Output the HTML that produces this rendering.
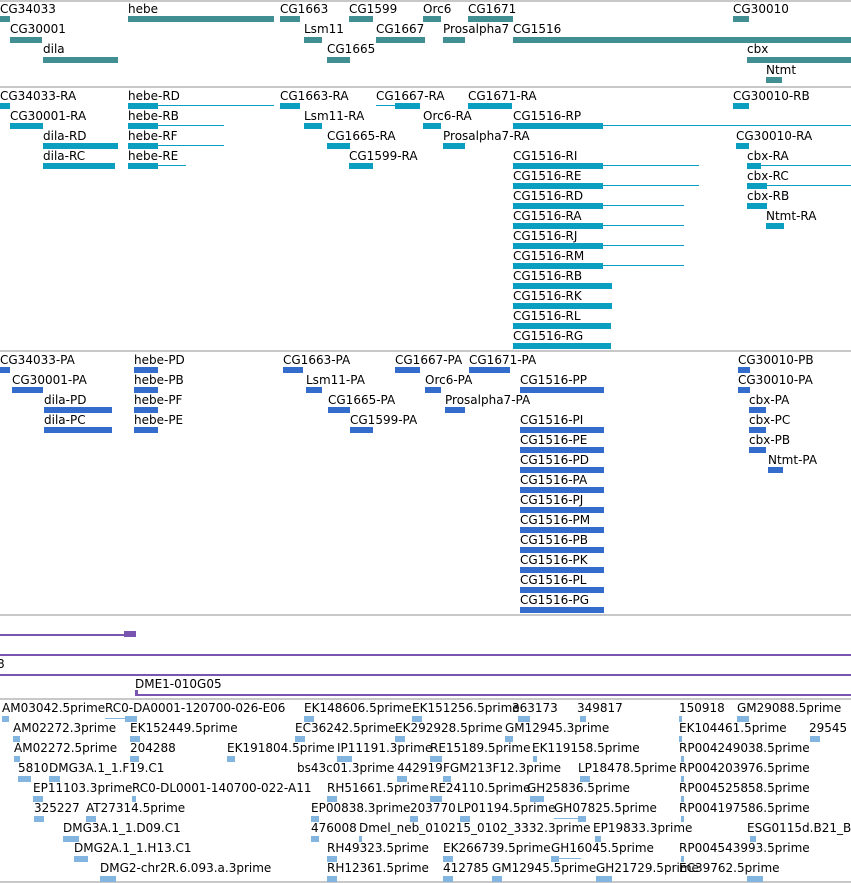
<!DOCTYPE html><html><head><style>
body{margin:0;width:851px;height:883px;position:relative;overflow:hidden;background:#fff}
.t{position:absolute;font:12px "DejaVu Sans","Liberation Sans",sans-serif;line-height:14px;color:#000;white-space:nowrap}
.b{position:absolute;height:6px}
.l{position:absolute;height:1px}
.g{background:#418f93}.r{background:#0a9fc0}.p{background:#346ccc}.e{background:#82b6e0}.v{background:#7a55b0}
.s{position:absolute;left:0;width:851px;height:2px;background:#c8c8c8}
</style></head><body>
<div class="s" style="top:0"></div><div class="s" style="top:86"></div>
<div class="s" style="top:86px"></div><div class="s" style="top:350px"></div><div class="s" style="top:614px"></div><div class="s" style="top:698px"></div><div class="s" style="top:881px"></div>

<!-- genes -->
<div class="t" style="left:0;top:2px">CG34033</div><div class="b g" style="left:0;top:16px;width:10px"></div>
<div class="t" style="left:128px;top:2px">hebe</div><div class="b g" style="left:128px;top:16px;width:146px"></div>
<div class="t" style="left:280px;top:2px">CG1663</div><div class="b g" style="left:280px;top:16px;width:20px"></div>
<div class="t" style="left:349px;top:2px">CG1599</div><div class="b g" style="left:349px;top:16px;width:24px"></div>
<div class="t" style="left:423px;top:2px">Orc6</div><div class="b g" style="left:423px;top:16px;width:18px"></div>
<div class="t" style="left:468px;top:2px">CG1671</div><div class="b g" style="left:468px;top:16px;width:45px"></div>
<div class="t" style="left:733px;top:2px">CG30010</div><div class="b g" style="left:733px;top:16px;width:16px"></div>
<div class="t" style="left:10px;top:22px">CG30001</div><div class="b g" style="left:10px;top:37px;width:32px"></div>
<div class="t" style="left:304px;top:22px">Lsm11</div><div class="b g" style="left:304px;top:37px;width:18px"></div>
<div class="t" style="left:376px;top:22px">CG1667</div><div class="b g" style="left:376px;top:37px;width:49px"></div>
<div class="t" style="left:443px;top:22px">Prosalpha7</div><div class="b g" style="left:443px;top:37px;width:22px"></div>
<div class="t" style="left:513px;top:22px">CG1516</div><div class="b g" style="left:513px;top:37px;width:338px"></div>
<div class="t" style="left:43px;top:42px">dila</div><div class="b g" style="left:43px;top:57px;width:75px"></div>
<div class="t" style="left:327px;top:42px">CG1665</div><div class="b g" style="left:327px;top:57px;width:23px"></div>
<div class="t" style="left:747px;top:42px">cbx</div><div class="b g" style="left:747px;top:57px;width:104px"></div>
<div class="t" style="left:766px;top:63px">Ntmt</div><div class="b g" style="left:766px;top:77px;width:16px"></div>

<!-- transcripts -->
<div class="t" style="left:0;top:89px">CG34033-RA</div><div class="b r" style="left:0;top:103px;width:10px"></div>
<div class="t" style="left:128px;top:89px">hebe-RD</div><div class="b r" style="left:128px;top:103px;width:30px"></div><div class="l r" style="left:158px;top:105px;width:116px"></div>
<div class="t" style="left:280px;top:89px">CG1663-RA</div><div class="b r" style="left:280px;top:103px;width:20px"></div>
<div class="t" style="left:376px;top:89px">CG1667-RA</div><div class="l r" style="left:376px;top:105px;width:20px"></div><div class="b r" style="left:395px;top:103px;width:25px"></div>
<div class="t" style="left:468px;top:89px">CG1671-RA</div><div class="b r" style="left:468px;top:103px;width:44px"></div>
<div class="t" style="left:733px;top:89px">CG30010-RB</div><div class="b r" style="left:733px;top:103px;width:16px"></div>
<div class="t" style="left:10px;top:109px">CG30001-RA</div><div class="b r" style="left:10px;top:123px;width:33px"></div>
<div class="t" style="left:128px;top:109px">hebe-RB</div><div class="b r" style="left:128px;top:123px;width:30px"></div><div class="l r" style="left:158px;top:125px;width:66px"></div>
<div class="t" style="left:304px;top:109px">Lsm11-RA</div><div class="b r" style="left:304px;top:123px;width:18px"></div>
<div class="t" style="left:423px;top:109px">Orc6-RA</div><div class="b r" style="left:423px;top:123px;width:18px"></div>
<div class="t" style="left:513px;top:109px">CG1516-RP</div><div class="b r" style="left:513px;top:123px;width:90px"></div><div class="l r" style="left:603px;top:125px;width:248px"></div>
<div class="t" style="left:43px;top:129px">dila-RD</div><div class="b r" style="left:43px;top:143px;width:75px"></div>
<div class="t" style="left:128px;top:129px">hebe-RF</div><div class="b r" style="left:128px;top:143px;width:30px"></div><div class="l r" style="left:158px;top:145px;width:66px"></div>
<div class="t" style="left:327px;top:129px">CG1665-RA</div><div class="b r" style="left:327px;top:143px;width:23px"></div>
<div class="t" style="left:443px;top:129px">Prosalpha7-RA</div><div class="b r" style="left:443px;top:143px;width:22px"></div>
<div class="t" style="left:736px;top:129px">CG30010-RA</div><div class="b r" style="left:736px;top:143px;width:13px"></div>
<div class="t" style="left:43px;top:149px">dila-RC</div><div class="b r" style="left:43px;top:163px;width:72px"></div>
<div class="t" style="left:128px;top:149px">hebe-RE</div><div class="b r" style="left:128px;top:163px;width:30px"></div><div class="l r" style="left:158px;top:165px;width:28px"></div>
<div class="t" style="left:349px;top:149px">CG1599-RA</div><div class="b r" style="left:349px;top:163px;width:24px"></div>
<div class="t" style="left:747px;top:149px">cbx-RA</div><div class="b r" style="left:747px;top:163px;width:14px"></div><div class="l r" style="left:760px;top:165px;width:91px"></div>
<div class="t" style="left:747px;top:169px">cbx-RC</div><div class="b r" style="left:747px;top:183px;width:20px"></div><div class="l r" style="left:766px;top:185px;width:85px"></div>
<div class="t" style="left:747px;top:189px">cbx-RB</div><div class="b r" style="left:747px;top:203px;width:20px"></div>
<div class="t" style="left:766px;top:209px">Ntmt-RA</div><div class="b r" style="left:766px;top:223px;width:18px"></div>

<div class="t" style="left:513px;top:149px">CG1516-RI</div><div class="b r" style="left:513px;top:163px;width:90px"></div><div class="l r" style="left:603px;top:165px;width:96px"></div>
<div class="t" style="left:513px;top:169px">CG1516-RE</div><div class="b r" style="left:513px;top:183px;width:90px"></div><div class="l r" style="left:603px;top:185px;width:96px"></div>
<div class="t" style="left:513px;top:189px">CG1516-RD</div><div class="b r" style="left:513px;top:203px;width:90px"></div><div class="l r" style="left:603px;top:205px;width:81px"></div>
<div class="t" style="left:513px;top:209px">CG1516-RA</div><div class="b r" style="left:513px;top:223px;width:90px"></div><div class="l r" style="left:603px;top:225px;width:81px"></div>
<div class="t" style="left:513px;top:229px">CG1516-RJ</div><div class="b r" style="left:513px;top:243px;width:90px"></div><div class="l r" style="left:603px;top:245px;width:81px"></div>
<div class="t" style="left:513px;top:249px">CG1516-RM</div><div class="b r" style="left:513px;top:263px;width:90px"></div><div class="l r" style="left:603px;top:265px;width:81px"></div>
<div class="t" style="left:513px;top:269px">CG1516-RB</div><div class="b r" style="left:513px;top:283px;width:99px"></div>
<div class="t" style="left:513px;top:289px">CG1516-RK</div><div class="b r" style="left:513px;top:303px;width:99px"></div>
<div class="t" style="left:513px;top:309px">CG1516-RL</div><div class="b r" style="left:513px;top:323px;width:98px"></div>
<div class="t" style="left:513px;top:329px">CG1516-RG</div><div class="b r" style="left:513px;top:343px;width:98px"></div>

<!-- proteins -->
<div class="t" style="left:0;top:353px">CG34033-PA</div><div class="b p" style="left:0;top:367px;width:10px"></div>
<div class="t" style="left:134px;top:353px">hebe-PD</div><div class="b p" style="left:134px;top:367px;width:24px"></div>
<div class="t" style="left:283px;top:353px">CG1663-PA</div><div class="b p" style="left:283px;top:367px;width:20px"></div>
<div class="t" style="left:395px;top:353px">CG1667-PA</div><div class="b p" style="left:395px;top:367px;width:25px"></div>
<div class="t" style="left:469px;top:353px">CG1671-PA</div><div class="b p" style="left:469px;top:367px;width:41px"></div>
<div class="t" style="left:738px;top:353px">CG30010-PB</div><div class="b p" style="left:738px;top:367px;width:12px"></div>
<div class="t" style="left:12px;top:373px">CG30001-PA</div><div class="b p" style="left:12px;top:387px;width:31px"></div>
<div class="t" style="left:134px;top:373px">hebe-PB</div><div class="b p" style="left:134px;top:387px;width:24px"></div>
<div class="t" style="left:306px;top:373px">Lsm11-PA</div><div class="b p" style="left:306px;top:387px;width:16px"></div>
<div class="t" style="left:425px;top:373px">Orc6-PA</div><div class="b p" style="left:425px;top:387px;width:16px"></div>
<div class="t" style="left:520px;top:373px">CG1516-PP</div><div class="b p" style="left:520px;top:387px;width:84px"></div>
<div class="t" style="left:738px;top:373px">CG30010-PA</div><div class="b p" style="left:738px;top:387px;width:12px"></div>
<div class="t" style="left:44px;top:393px">dila-PD</div><div class="b p" style="left:44px;top:407px;width:68px"></div>
<div class="t" style="left:134px;top:393px">hebe-PF</div><div class="b p" style="left:134px;top:407px;width:24px"></div>
<div class="t" style="left:328px;top:393px">CG1665-PA</div><div class="b p" style="left:328px;top:407px;width:22px"></div>
<div class="t" style="left:445px;top:393px">Prosalpha7-PA</div><div class="b p" style="left:445px;top:407px;width:20px"></div>
<div class="t" style="left:749px;top:393px">cbx-PA</div><div class="b p" style="left:749px;top:407px;width:17px"></div>
<div class="t" style="left:44px;top:413px">dila-PC</div><div class="b p" style="left:44px;top:427px;width:68px"></div>
<div class="t" style="left:134px;top:413px">hebe-PE</div><div class="b p" style="left:134px;top:427px;width:24px"></div>
<div class="t" style="left:350px;top:413px">CG1599-PA</div><div class="b p" style="left:350px;top:427px;width:23px"></div>
<div class="t" style="left:749px;top:413px">cbx-PC</div><div class="b p" style="left:749px;top:427px;width:17px"></div>
<div class="t" style="left:749px;top:433px">cbx-PB</div><div class="b p" style="left:749px;top:447px;width:17px"></div>
<div class="t" style="left:768px;top:453px">Ntmt-PA</div><div class="b p" style="left:768px;top:467px;width:15px"></div>
<div class="t" style="left:520px;top:413px">CG1516-PI</div><div class="b p" style="left:520px;top:427px;width:84px"></div>
<div class="t" style="left:520px;top:433px">CG1516-PE</div><div class="b p" style="left:520px;top:447px;width:84px"></div>
<div class="t" style="left:520px;top:453px">CG1516-PD</div><div class="b p" style="left:520px;top:467px;width:84px"></div>
<div class="t" style="left:520px;top:473px">CG1516-PA</div><div class="b p" style="left:520px;top:487px;width:84px"></div>
<div class="t" style="left:520px;top:493px">CG1516-PJ</div><div class="b p" style="left:520px;top:507px;width:84px"></div>
<div class="t" style="left:520px;top:513px">CG1516-PM</div><div class="b p" style="left:520px;top:527px;width:84px"></div>
<div class="t" style="left:520px;top:533px">CG1516-PB</div><div class="b p" style="left:520px;top:547px;width:84px"></div>
<div class="t" style="left:520px;top:553px">CG1516-PK</div><div class="b p" style="left:520px;top:567px;width:84px"></div>
<div class="t" style="left:520px;top:573px">CG1516-PL</div><div class="b p" style="left:520px;top:587px;width:84px"></div>
<div class="t" style="left:520px;top:593px">CG1516-PG</div><div class="b p" style="left:520px;top:607px;width:84px"></div>

<!-- purple -->
<div class="l v" style="left:0;top:634px;width:128px;height:2px"></div><div class="b v" style="left:124px;top:631px;width:12px"></div>
<div class="l v" style="left:0;top:654px;width:851px;height:2px"></div>
<div class="t" style="left:-3px;top:657px">8</div>
<div class="l v" style="left:0;top:674px;width:851px;height:2px"></div>
<div class="t" style="left:135px;top:677px">DME1-010G05</div>
<div class="l v" style="left:135px;top:694px;width:716px;height:2px"></div><div class="b v" style="left:135px;top:690px;width:3px"></div>

<!-- ESTs -->
<div class="t" style="left:2px;top:701px">AM03042.5prime</div><div class="b e" style="left:2px;top:716px;width:7px"></div>
<div class="t" style="left:105px;top:701px">RC0-DA0001-120700-026-E06</div><div class="l e" style="left:105px;top:718px;width:27px"></div><div class="b e" style="left:125px;top:716px;width:12px"></div>
<div class="t" style="left:304px;top:701px">EK148606.5prime</div><div class="b e" style="left:304px;top:716px;width:10px"></div>
<div class="t" style="left:412px;top:701px">EK151256.5prime</div><div class="b e" style="left:412px;top:716px;width:10px"></div>
<div class="t" style="left:512px;top:701px">363173</div><div class="b e" style="left:518px;top:716px;width:12px"></div>
<div class="t" style="left:577px;top:701px">349817</div><div class="b e" style="left:580px;top:716px;width:6px"></div>
<div class="t" style="left:679px;top:701px">150918</div><div class="b e" style="left:679px;top:716px;width:3px"></div>
<div class="t" style="left:737px;top:701px">GM29088.5prime</div><div class="b e" style="left:737px;top:716px;width:12px"></div>

<div class="t" style="left:13px;top:721px">AM02272.3prime</div><div class="b e" style="left:13px;top:736px;width:7px"></div>
<div class="t" style="left:130px;top:721px">EK152449.5prime</div><div class="b e" style="left:130px;top:736px;width:10px"></div>
<div class="t" style="left:295px;top:721px">EC36242.5prime</div><div class="b e" style="left:295px;top:736px;width:10px"></div>
<div class="t" style="left:395px;top:721px">EK292928.5prime</div><div class="b e" style="left:395px;top:736px;width:10px"></div>
<div class="t" style="left:505px;top:721px">GM12945.3prime</div><div class="b e" style="left:505px;top:736px;width:8px"></div>
<div class="t" style="left:679px;top:721px">EK104461.5prime</div><div class="b e" style="left:679px;top:736px;width:3px"></div>
<div class="t" style="left:809px;top:721px">29545</div><div class="b e" style="left:810px;top:736px;width:10px"></div>

<div class="t" style="left:14px;top:741px">AM02272.5prime</div><div class="b e" style="left:14px;top:756px;width:6px"></div>
<div class="t" style="left:130px;top:741px">204288</div><div class="b e" style="left:130px;top:756px;width:9px"></div>
<div class="t" style="left:227px;top:741px">EK191804.5prime</div><div class="b e" style="left:227px;top:756px;width:8px"></div>
<div class="t" style="left:337px;top:741px">IP11191.3prime</div><div class="b e" style="left:337px;top:756px;width:15px"></div>
<div class="t" style="left:430px;top:741px">RE15189.5prime</div><div class="b e" style="left:430px;top:756px;width:12px"></div>
<div class="t" style="left:532px;top:741px">EK119158.5prime</div><div class="b e" style="left:533px;top:756px;width:4px"></div>
<div class="t" style="left:679px;top:741px">RP004249038.5prime</div><div class="b e" style="left:681px;top:756px;width:3px"></div>

<div class="t" style="left:18px;top:761px">5810</div><div class="b e" style="left:18px;top:776px;width:13px"></div>
<div class="t" style="left:49px;top:761px">DMG3A.1_1.F19.C1</div><div class="b e" style="left:49px;top:776px;width:11px"></div>
<div class="t" style="left:297px;top:761px">bs43c01.3prime</div>
<div class="t" style="left:397px;top:761px">442919</div><div class="b e" style="left:397px;top:776px;width:10px"></div>
<div class="t" style="left:443px;top:761px">FGM213F12.3prime</div><div class="b e" style="left:443px;top:776px;width:8px"></div>
<div class="t" style="left:578px;top:761px">LP18478.5prime</div><div class="b e" style="left:580px;top:776px;width:10px"></div>
<div class="t" style="left:679px;top:761px">RP004203976.5prime</div><div class="b e" style="left:681px;top:776px;width:3px"></div>

<div class="t" style="left:33px;top:781px">EP11103.3prime</div><div class="b e" style="left:33px;top:796px;width:10px"></div>
<div class="t" style="left:132px;top:781px">RC0-DL0001-140700-022-A11</div><div class="b e" style="left:132px;top:796px;width:4px"></div>
<div class="t" style="left:327px;top:781px">RH51661.5prime</div><div class="b e" style="left:327px;top:796px;width:10px"></div>
<div class="t" style="left:430px;top:781px">RE24110.5prime</div><div class="b e" style="left:430px;top:796px;width:12px"></div>
<div class="t" style="left:527px;top:781px">GH25836.5prime</div><div class="b e" style="left:530px;top:796px;width:14px"></div>
<div class="t" style="left:679px;top:781px">RP004525858.5prime</div><div class="b e" style="left:681px;top:796px;width:3px"></div>

<div class="t" style="left:34px;top:801px">325227</div><div class="b e" style="left:34px;top:816px;width:10px"></div>
<div class="t" style="left:86px;top:801px">AT27314.5prime</div><div class="b e" style="left:86px;top:816px;width:10px"></div>
<div class="t" style="left:311px;top:801px">EP00838.3prime</div><div class="b e" style="left:311px;top:816px;width:8px"></div>
<div class="t" style="left:410px;top:801px">203770</div><div class="b e" style="left:410px;top:816px;width:8px"></div>
<div class="t" style="left:457px;top:801px">LP01194.5prime</div><div class="b e" style="left:460px;top:816px;width:10px"></div>
<div class="t" style="left:554px;top:801px">GH07825.5prime</div><div class="l e" style="left:554px;top:818px;width:30px"></div><div class="b e" style="left:578px;top:816px;width:8px"></div>
<div class="t" style="left:679px;top:801px">RP004197586.5prime</div><div class="b e" style="left:681px;top:816px;width:3px"></div>

<div class="t" style="left:63px;top:821px">DMG3A.1_1.D09.C1</div><div class="b e" style="left:63px;top:836px;width:16px"></div>
<div class="t" style="left:311px;top:821px">476008</div><div class="b e" style="left:311px;top:836px;width:8px"></div>
<div class="t" style="left:359px;top:821px">Dmel_neb_010215_0102_3332.3prime</div><div class="b e" style="left:359px;top:836px;width:3px"></div>
<div class="t" style="left:593px;top:821px">EP19833.3prime</div><div class="b e" style="left:595px;top:836px;width:6px"></div>
<div class="t" style="left:747px;top:821px">ESG0115d.B21_B0</div><div class="b e" style="left:750px;top:836px;width:6px"></div>

<div class="t" style="left:74px;top:841px">DMG2A.1_1.H13.C1</div><div class="b e" style="left:74px;top:856px;width:14px"></div>
<div class="t" style="left:327px;top:841px">RH49323.5prime</div><div class="b e" style="left:327px;top:856px;width:10px"></div>
<div class="t" style="left:443px;top:841px">EK266739.5prime</div><div class="b e" style="left:443px;top:856px;width:10px"></div>
<div class="t" style="left:551px;top:841px">GH16045.5prime</div><div class="l e" style="left:551px;top:858px;width:30px"></div><div class="b e" style="left:551px;top:856px;width:8px"></div>
<div class="t" style="left:679px;top:841px">RP004543993.5prime</div><div class="b e" style="left:681px;top:856px;width:3px"></div>

<div class="t" style="left:100px;top:861px">DMG2-chr2R.6.093.a.3prime</div><div class="b e" style="left:100px;top:876px;width:16px"></div>
<div class="t" style="left:327px;top:861px">RH12361.5prime</div><div class="b e" style="left:327px;top:876px;width:10px"></div>
<div class="t" style="left:443px;top:861px">412785</div><div class="b e" style="left:443px;top:876px;width:10px"></div>
<div class="t" style="left:492px;top:861px">GM12945.5prime</div><div class="b e" style="left:492px;top:876px;width:10px"></div>
<div class="t" style="left:596px;top:861px">GH21729.5prime</div><div class="b e" style="left:596px;top:876px;width:16px"></div>
<div class="t" style="left:679px;top:861px">EC39762.5prime</div><div class="b e" style="left:747px;top:876px;width:16px"></div>
</body></html>
